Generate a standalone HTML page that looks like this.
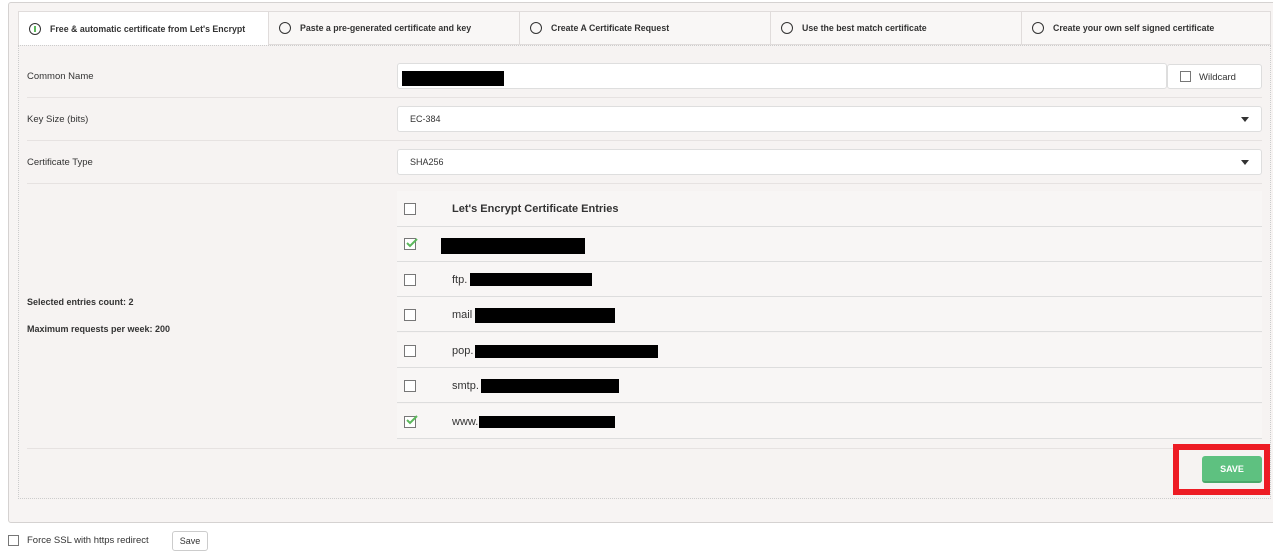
<!DOCTYPE html>
<html><head><style>
*{box-sizing:border-box;margin:0;padding:0}
body{width:1273px;height:550px;background:#fff;font-family:"Liberation Sans",sans-serif;font-size:10px;color:#333;position:relative;overflow:hidden}
.a{position:absolute}
.outer{left:8px;top:2px;width:1275px;height:521px;background:#f7f4f3;border:1px solid #d5d2d1;border-radius:3px}
.tab{top:11px;height:34px;background:#f9f7f6;border:1px solid #e0dcdb;border-right:none;font-size:8.8px;font-weight:bold;color:#333;display:flex;align-items:center;padding-left:10px}
.tab.act{background:#fff;border-bottom:none}
.rad{width:12px;height:12px;border:1.2px solid #333;border-radius:50%;margin-right:9px;flex:none}
.inner{left:18px;top:45px;width:1253px;height:454px;background:#f6f3f2;border:1px dotted #ccc}
.lbl{left:27px;font-size:9.5px;color:#333}
.inp{left:397px;width:865px;height:26px;background:#fff;border:1px solid #dedede;border-radius:3px;font-size:9px;padding-left:12px;display:flex;align-items:center}
.sep{left:27px;width:1235px;height:1px;background:#e6e2e1}
.caret{position:absolute;right:12px;top:10px;border-left:4px solid transparent;border-right:4px solid transparent;border-top:5px solid #333}
.cb{width:12px;height:12px;border:1px solid #777;background:#fff}
.row{left:397px;width:865px;height:35px;border-bottom:1px solid #ddd;background:#f8f6f5}
.row .cb{position:absolute;left:7px;top:12px}
.row .t{position:absolute;left:55px;top:12px;font-size:11px;color:#333}
.blk{background:#000;position:absolute}
.chk{position:absolute;left:8px;top:9px}
</style></head><body>
<div class="a outer"></div>
<div class="a tab act" style="left:18px;width:250px"><div class="rad" style="position:relative"><div style="position:absolute;left:4px;top:2px;width:2px;height:6px;background:#5cb85c"></div></div>Free &amp; automatic certificate from Let's Encrypt</div>
<div class="a tab" style="left:268px;width:251px"><div class="rad"></div>Paste a pre-generated certificate and key</div>
<div class="a tab" style="left:519px;width:251px"><div class="rad"></div>Create A Certificate Request</div>
<div class="a tab" style="left:770px;width:251px"><div class="rad"></div>Use the best match certificate</div>
<div class="a tab" style="left:1021px;width:250px;border-right:1px solid #e0dcdb"><div class="rad"></div>Create your own self signed certificate</div>
<div class="a inner"></div>
<div class="a lbl" style="top:71px">Common Name</div>
<div class="a inp" style="top:63px;width:770px"><div class="blk" style="left:4px;top:7px;width:102px;height:15px"></div></div>
<div class="a" style="left:1167px;top:64px;width:95px;height:25px;background:#fff;border:1px solid #ddd;border-radius:3px"><div class="cb" style="position:absolute;left:12px;top:6px;width:11px;height:11px"></div><span style="position:absolute;left:31px;top:7px;font-size:9.5px">Wildcard</span></div>
<div class="a sep" style="top:97px"></div>
<div class="a lbl" style="top:114px">Key Size (bits)</div>
<div class="a inp" style="top:106px">EC-384<div class="caret"></div></div>
<div class="a sep" style="top:140px"></div>
<div class="a lbl" style="top:157px">Certificate Type</div>
<div class="a inp" style="top:149px">SHA256<div class="caret"></div></div>
<div class="a sep" style="top:183px"></div>
<div class="a row" style="top:191px;height:36px"><div class="cb"></div><div class="t" style="font-weight:bold;top:12px">Let's Encrypt Certificate Entries</div></div>
<div class="a row" style="top:227px"><div class="cb" style="top:11px"></div><svg class="chk" style="top:10px" width="14" height="12"><path d="M2 6 L5 9 L12 2" stroke="#5cb85c" stroke-width="2" fill="none"/></svg><div class="blk" style="left:44px;top:11px;width:144px;height:16px"></div></div>
<div class="a row" style="top:262px"><div class="cb"></div><div class="t">ftp.</div><div class="blk" style="left:73px;top:11px;width:122px;height:13px"></div></div>
<div class="a row" style="top:297px"><div class="cb"></div><div class="t">mail</div><div class="blk" style="left:78px;top:11px;width:140px;height:15px"></div></div>
<div class="a row" style="top:333px"><div class="cb"></div><div class="t">pop.</div><div class="blk" style="left:78px;top:12px;width:183px;height:13px"></div></div>
<div class="a row" style="top:368px"><div class="cb"></div><div class="t">smtp.</div><div class="blk" style="left:84px;top:11px;width:138px;height:14px"></div></div>
<div class="a row" style="top:404px"><div class="cb"></div><svg class="chk" style="top:10px" width="14" height="12"><path d="M2 6 L5 9 L12 2" stroke="#5cb85c" stroke-width="2" fill="none"/></svg><div class="t">www.</div><div class="blk" style="left:82px;top:12px;width:136px;height:12px"></div></div>
<div class="a lbl" style="top:297px;font-weight:bold;font-size:9px">Selected entries count: 2</div>
<div class="a lbl" style="top:324px;font-weight:bold;font-size:9px">Maximum requests per week: 200</div>
<div class="a sep" style="top:448px"></div>
<div class="a" style="left:1173px;top:444px;width:97px;height:51px;border:6px solid #ed1c24"></div>
<div class="a" style="left:1202px;top:456px;width:60px;height:27px;background:#5ec180;border-bottom:2px solid #4aa96a;border-radius:3px;color:#fff;font-weight:bold;font-size:9px;text-align:center;line-height:26px">SAVE</div>
<div class="a cb" style="left:8px;top:535px;width:11px;height:11px"></div>
<div class="a" style="left:27px;top:535px;font-size:9.5px">Force SSL with https redirect</div>
<div class="a" style="left:172px;top:531px;width:36px;height:20px;border:1px solid #ccc;border-radius:3px;background:#fff;font-size:9px;text-align:center;line-height:18px">Save</div>
</body></html>
